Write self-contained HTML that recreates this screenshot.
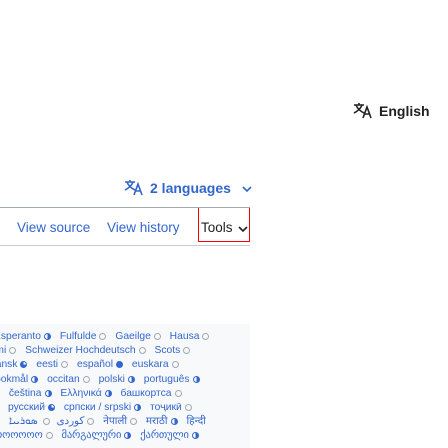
<!DOCTYPE html>
<html><head><meta charset="utf-8"><style>
body{margin:0;width:448px;height:448px;overflow:hidden;background:#fff;font-family:"Liberation Sans",Arial,sans-serif;position:relative}
.a{position:absolute;white-space:nowrap}
.eng{left:353px;top:102px;font-weight:bold;font-size:14px;color:#202122}
.lang{left:124px;top:179px;font-weight:bold;font-size:14px;color:#3366cc}
.tabs{left:0;top:207px;width:250px;height:37px;border-top:1px solid #a2a9b1;border-bottom:1px solid #c8ccd1}
.tab{position:absolute;top:12px;font-size:13.5px;color:#3366cc}
.tools{position:absolute;left:198px;top:0;width:52px;height:34px;border:1px solid red;box-sizing:border-box;border-top:none}
.box{left:0;top:324px;width:250px;height:124px;background:#f8f9fa;overflow:hidden}
.l{position:absolute;white-space:nowrap;font-size:10.3px;color:#3366cc;line-height:12px}
.l span.c{display:inline-block;width:7px;height:7px;border-radius:50%;box-sizing:border-box;border:1.5px solid #a2a9b1;margin:0 6px 0 3px;vertical-align:-1px}
.l span.h{border:1.5px solid #3366cc;background:linear-gradient(90deg,#fff 50%,#3366cc 50%)}
.l span.f{border:1.5px solid #3366cc;background:#3366cc}
.l span.q{border:1.5px solid #3366cc;background:conic-gradient(#fff 0 25%,#3366cc 25% 100%)}
</style></head><body>
<div class="a eng"><svg width="20" height="17" viewBox="0 0 20 17" style="vertical-align:-3px;margin-right:6px"><g fill="none" stroke="#202122" stroke-width="1.6"><path d="M1 3h10M6 1v2M3 3q2 5 8 8M9 3q-2 5-8 8"/><path d="M10 16l4-11 4 11M11.5 12h5"/></g></svg>English</div>
<div class="a lang"><svg width="20" height="17" viewBox="0 0 20 17" style="vertical-align:-3px;margin-right:6px"><g fill="none" stroke="#3366cc" stroke-width="1.6"><path d="M1 3h10M6 1v2M3 3q2 5 8 8M9 3q-2 5-8 8"/><path d="M10 16l4-11 4 11M11.5 12h5"/></g></svg>2 languages <svg width="10" height="8" viewBox="0 0 10 8" style="margin-left:7px"><path d="M1 2l4 4 4-4" fill="none" stroke="#3366cc" stroke-width="1.6"/></svg></div>
<div class="a tabs">
<div class="tab" style="left:17px">View source</div>
<div class="tab" style="left:107px">View history</div>
<div class="tools"><span class="tab" style="left:2px;color:#202122">Tools</span><svg width="10" height="8" viewBox="0 0 10 8" style="position:absolute;left:39px;top:17px"><path d="M1 2l4 4 4-4" fill="none" stroke="#202122" stroke-width="1.6"/></svg></div>
</div>
<div class="a box">
<div class="l" style="top:7px;left:-6px">Esperanto<span class="c h"></span> Fulfulde<span class="c"></span> Gaeilge<span class="c"></span> Hausa<span class="c"></span></div>
<div class="l" style="top:21px;left:-12px">Ilimi<span class="c"></span> Schweizer Hochdeutsch<span class="c"></span> Scots<span class="c"></span></div>
<div class="l" style="top:35px;left:-10px">dansk<span class="c q"></span> eesti<span class="c"></span> español<span class="c f"></span> euskara<span class="c"></span></div>
<div class="l" style="top:50px;left:-5px">bokmål<span class="c h"></span> occitan<span class="c"></span> polski<span class="c h"></span> português<span class="c h"></span></div>
<div class="l" style="top:64px;left:-10px"><span class="c"></span> čeština<span class="c h"></span> Ελληνικά<span class="c h"></span> башкортса<span class="c"></span></div>
<div class="l" style="top:78px;left:8px">русский<span class="c q"></span> српски / srpski<span class="c h"></span> тоҷикӣ<span class="c"></span></div>
<div class="l" style="top:92px;left:-10px"><span class="c"></span> کوردی<span class="c"></span> ܣܘܪܝܝܐ<span class="c"></span> नेपाली<span class="c"></span> मराठी<span class="c h"></span> हिन्दी</div>
<div class="l" style="top:106px;left:-6px">ოოოოოო<span class="c"></span> მარგალური<span class="c h"></span> ქართული<span class="c h"></span></div>
</div>
</body></html>
